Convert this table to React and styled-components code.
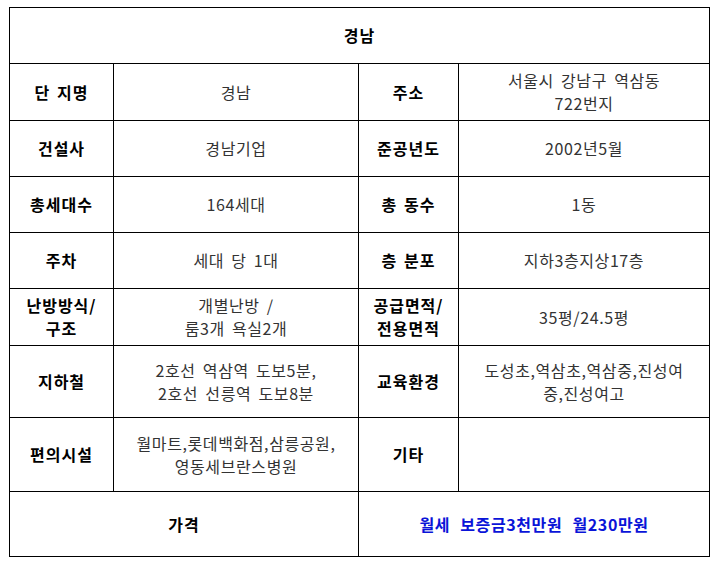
import React from 'react';
import styled, { createGlobalStyle } from 'styled-components';

const GlobalStyle = createGlobalStyle`
  body {
    margin: 0;
    background: #ffffff;
    font-family: "Noto Sans CJK KR", "Noto Sans", sans-serif;
  }
`;

const Page = styled.div`
  padding: 7px 0 0 9px;
`;

const Table = styled.table`
  width: 700px;
  border-collapse: collapse;
  table-layout: fixed;
  border: 1px solid #000;
`;

const Row = styled.tr`
  height: ${p => p.h}px;
`;

const Cell = styled.td`
  border: 1px solid #000;
  padding: 0 4px;
  text-align: center;
  vertical-align: middle;
  font-size: 16px;
  line-height: 23px;
  color: #333;
  font-weight: 400;
  letter-spacing: 0.6px;
  word-spacing: 3px;
`;

const Label = styled(Cell)`
  font-weight: 700;
  color: #000;
  letter-spacing: 1px;
  word-spacing: 2px;
`;

const Price = styled(Cell)`
  font-weight: 700;
  color: #0a14d8;
  letter-spacing: 0.6px;
  word-spacing: 6px;
`;

const rows = [
  { h: 57, a: '단 지명', b: '경남', c: '주소', d: ['서울시 강남구 역삼동', '722번지'] },
  { h: 56, a: '건설사', b: '경남기업', c: '준공년도', d: '2002년5월' },
  { h: 56, a: '총세대수', b: '164세대', c: '총 동수', d: '1동' },
  { h: 56, a: '주차', b: '세대 당 1대', c: '층 분포', d: '지하3층지상17층' },
  { h: 57, a: ['난방방식/', '구조'], b: ['개별난방 /', '룸3개 욕실2개'], c: ['공급면적/', '전용면적'], d: '35평/24.5평' },
  { h: 72, a: '지하철', b: ['2호선 역삼역 도보5분,', '2호선 선릉역 도보8분'], c: '교육환경', d: ['도성초,역삼초,역삼중,진성여', '중,진성여고'] },
  { h: 74, a: '편의시설', b: ['월마트,롯데백화점,삼릉공원,', '영동세브란스병원'], c: '기타', d: '' },
];

const Lines = ({ v }) =>
  Array.isArray(v) ? v.map((t, i) => <div key={i}>{t}</div>) : v;

export default function App() {
  return (
    <Page>
      <GlobalStyle />
      <Table>
        <colgroup>
          <col style={{ width: 104 }} />
          <col style={{ width: 245 }} />
          <col style={{ width: 100 }} />
          <col style={{ width: 251 }} />
        </colgroup>
        <tbody>
          <Row h={56}>
            <Label colSpan={4}>경남</Label>
          </Row>
          {rows.map((r, i) => (
            <Row key={i} h={r.h}>
              <Label><Lines v={r.a} /></Label>
              <Cell><Lines v={r.b} /></Cell>
              <Label><Lines v={r.c} /></Label>
              <Cell><Lines v={r.d} /></Cell>
            </Row>
          ))}
          <Row h={65}>
            <Label colSpan={2}>가격</Label>
            <Price colSpan={2}>월세 보증금3천만원 월230만원</Price>
          </Row>
        </tbody>
      </Table>
    </Page>
  );
}
